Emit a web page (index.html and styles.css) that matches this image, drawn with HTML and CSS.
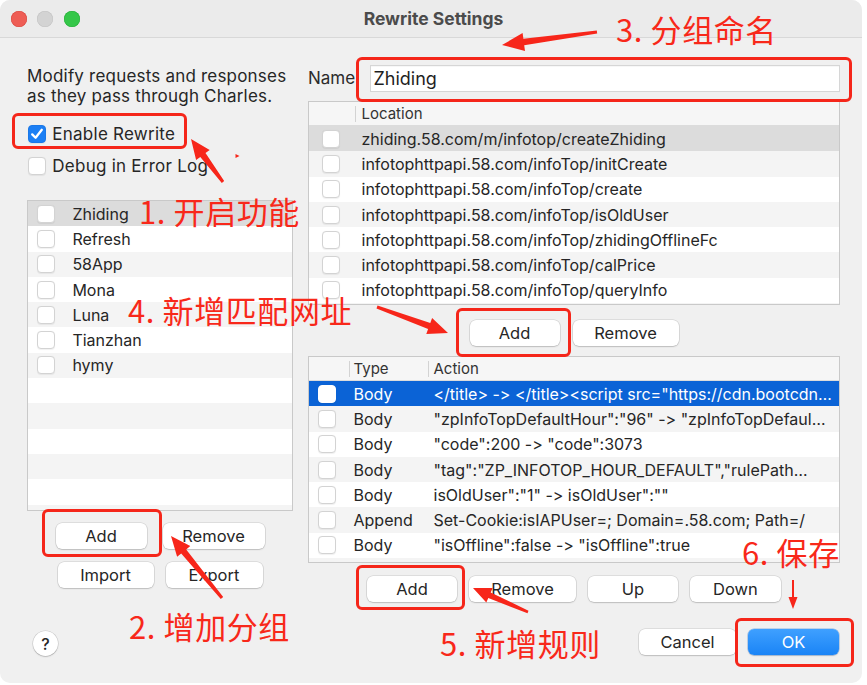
FILE: index.html
```html
<!DOCTYPE html>
<html lang="en">
<head>
<meta charset="utf-8">
<title>Rewrite Settings</title>
<link rel="stylesheet" href="styles.css">
</head>
<body>
<div class="window">
  <header class="titlebar">
    <div class="lights">
      <span class="light red"></span>
      <span class="light gray"></span>
      <span class="light green"></span>
    </div>
    <div class="title">Rewrite Settings</div>
    <div></div>
  </header>

  <main class="content">
    <section class="left">
      <p class="desc">Modify requests and responses<br>as they pass through Charles.</p>
      <div class="check-row enable">
        <span class="cb checked"><svg viewBox="0 0 18 18" width="18" height="18"><path d="M4.2 9.4 L7.6 12.8 L13.8 4.8" fill="none" stroke="#fff" stroke-width="2.3" stroke-linecap="round" stroke-linejoin="round"/></svg></span>
        <span>Enable Rewrite</span>
      </div>
      <div class="check-row debug">
        <span class="cb"></span>
        <span>Debug in Error Log</span>
      </div>

      <div class="list">
        <div class="row sel"><span class="cb"></span><span>Zhiding</span></div>
        <div class="row"><span class="cb"></span><span>Refresh</span></div>
        <div class="row"><span class="cb"></span><span>58App</span></div>
        <div class="row"><span class="cb"></span><span>Mona</span></div>
        <div class="row"><span class="cb"></span><span>Luna</span></div>
        <div class="row"><span class="cb"></span><span>Tianzhan</span></div>
        <div class="row"><span class="cb"></span><span>hymy</span></div>
        <div class="row"></div>
        <div class="row"></div>
        <div class="row"></div>
        <div class="row"></div>
        <div class="row"></div>
        <div class="row"></div>
      </div>

      <div class="btns first">
        <button class="btn w91">Add</button>
        <button class="btn w102">Remove</button>
      </div>
      <div class="btns second">
        <button class="btn w96">Import</button>
        <button class="btn w97">Export</button>
      </div>
      <button class="help">?</button>
    </section>

    <section class="right">
      <div class="name-row">
        <span class="label">Name</span>
        <div class="input">Zhiding</div>
      </div>

      <div class="table loc">
        <div class="thead">
          <div class="th"></div>
          <div class="th sep">Location</div>
        </div>
        <div class="trow sel"><span class="cb"></span><span class="cell">zhiding.58.com/m/infotop/createZhiding</span></div>
        <div class="trow"><span class="cb"></span><span class="cell">infotophttpapi.58.com/infoTop/initCreate</span></div>
        <div class="trow"><span class="cb"></span><span class="cell">infotophttpapi.58.com/infoTop/create</span></div>
        <div class="trow"><span class="cb"></span><span class="cell">infotophttpapi.58.com/infoTop/isOldUser</span></div>
        <div class="trow"><span class="cb"></span><span class="cell">infotophttpapi.58.com/infoTop/zhidingOfflineFc</span></div>
        <div class="trow"><span class="cb"></span><span class="cell">infotophttpapi.58.com/infoTop/calPrice</span></div>
        <div class="trow"><span class="cb"></span><span class="cell">infotophttpapi.58.com/infoTop/queryInfo</span></div>
        <div class="trow"><span class="cb"></span><span class="cell"></span></div>
      </div>

      <div class="btns loc-btns">
        <button class="btn w90">Add</button>
        <button class="btn w106">Remove</button>
      </div>

      <div class="table rules">
        <div class="thead">
          <div class="th"></div>
          <div class="th sep type">Type</div>
          <div class="th sep action">Action</div>
        </div>
        <div class="trow active"><span class="cb"></span><span class="cell type">Body</span><span class="cell action">&lt;/title&gt; -&gt; &lt;/title&gt;&lt;script src="https://cdn.bootcdn…</span></div>
        <div class="trow"><span class="cb"></span><span class="cell type">Body</span><span class="cell action">"zpInfoTopDefaultHour":"96" -&gt; "zpInfoTopDefaul…</span></div>
        <div class="trow"><span class="cb"></span><span class="cell type">Body</span><span class="cell action">"code":200 -&gt; "code":3073</span></div>
        <div class="trow"><span class="cb"></span><span class="cell type">Body</span><span class="cell action">"tag":"ZP_INFOTOP_HOUR_DEFAULT","rulePath…</span></div>
        <div class="trow"><span class="cb"></span><span class="cell type">Body</span><span class="cell action">isOldUser":"1" -&gt; isOldUser":""</span></div>
        <div class="trow"><span class="cb"></span><span class="cell type">Append</span><span class="cell action">Set-Cookie:isIAPUser=; Domain=.58.com; Path=/</span></div>
        <div class="trow"><span class="cb"></span><span class="cell type">Body</span><span class="cell action">"isOffline":false -&gt; "isOffline":true</span></div>
        <div class="trow"><span class="cb"></span><span class="cell type"></span><span class="cell action"></span></div>
      </div>

      <div class="btns rule-btns">
        <button class="btn w90">Add</button>
        <button class="btn w107">Remove</button>
        <button class="btn w90">Up</button>
        <button class="btn w91">Down</button>
      </div>

      <div class="dialog-btns">
        <button class="btn w97">Cancel</button>
        <button class="btn w91 primary">OK</button>
      </div>
    </section>
  </main>

  <div class="anno">
    <div class="box b-enable"></div>
    <div class="box b-add"></div>
    <div class="box b-name"></div>
    <div class="box b-locadd"></div>
    <div class="box b-ruleadd"></div>
    <div class="box b-ok"></div>

    <span class="note n1">1. 开启功能</span>
    <span class="note n2">2. 增加分组</span>
    <span class="note n3">3. 分组命名</span>
    <span class="note n4">4. 新增匹配网址</span>
    <span class="note n5">5. 新增规则</span>
    <span class="note n6">6. 保存</span>

    <svg class="arrows" width="862" height="683" viewBox="0 0 862 683">
      <g fill="#f7261a">
        <polygon points="224.2,181.1 205.5,153.1 209.7,149.9 191,139 196.1,160.1 200.3,156.9 221.8,182.9"/>
        <polygon points="223.2,597.0 186.2,549.4 190.3,546.0 171,536 177.1,556.8 181.2,553.4 220.8,599.0"/>
        <polygon points="596.8,30.5 523.4,38.8 522.6,33.1 502,45 525.0,50.9 524.2,45.2 597.2,33.5"/>
        <polygon points="376.5,308.4 428.1,329.1 426.3,334.1 448,333 432.1,318.1 430.3,323.1 377.5,305.6"/>
        <polygon points="528.5,610.8 490.7,592.4 492.7,587.9 473,588 486.3,602.5 488.3,598.0 527.5,613.2"/>
        <rect x="792" y="580" width="2" height="19"/>
        <polygon points="788.5,597 797.5,597 793,609"/>
        <polygon points="235.5,154 239.5,156 235.5,158"/>
      </g>
    </svg>
  </div>
</div>
</body>
</html>
```
FILE: styles.css
```css
* { box-sizing: border-box; }

html, body {
  margin: 0;
  padding: 0;
}

body {
  background: #ffffff;
  font-family: Inter, "Noto Sans", "Liberation Sans", sans-serif;
  font-size: 16px;
  color: #262626;
  font-variant-ligatures: none;
  font-feature-settings: "calt" 0, "liga" 0;
}

.window {
  position: relative;
  width: 862px;
  height: 683px;
  background: #f0f0f0;
  border-radius: 10px;
  overflow: hidden;
  display: flex;
  flex-direction: column;
}

/* title bar */
.titlebar {
  flex: none;
  height: 38px;
  padding-left: 5px;
  background: #ebebeb;
  border-bottom: 1px solid #d8d8d8;
  display: grid;
  grid-template-columns: 1fr auto 1fr;
  align-items: center;
}

.lights {
  display: flex;
  gap: 10.5px;
  padding-left: 5.7px;
}

.light {
  width: 16px;
  height: 16px;
  border-radius: 50%;
}

.light.red { background: #ee5d55; box-shadow: inset 0 0 0 0.5px #d9473f; }
.light.gray { background: #d3d3d3; box-shadow: inset 0 0 0 0.5px #c2c2c2; }
.light.green { background: #35c749; box-shadow: inset 0 0 0 0.5px #25ad37; }

.title {
  font-weight: 700;
  font-size: 17.5px;
  color: #4b4b4b;
}

/* content */
.content {
  flex: 1;
  display: flex;
  gap: 15px;
  padding: 26px 22px 0 27px;
}

.left {
  flex: none;
  width: 266px;
  display: flex;
  flex-direction: column;
}

.desc {
  margin: 2px 0 0;
  line-height: 20px;
  font-size: 17px;
  letter-spacing: 0.2px;
  white-space: nowrap;
}

.check-row {
  display: flex;
  align-items: center;
  gap: 6px;
  height: 20px;
  padding-left: 1.3px;
  font-size: 17px;
  letter-spacing: 0.25px;
  white-space: nowrap;
}

.check-row.enable { margin-top: 18px; }
.check-row.debug { margin-top: 12px; }

.cb {
  flex: none;
  width: 18px;
  height: 18px;
  border-radius: 4px;
  background: #fff;
  border: 1px solid #d3d3d3;
  box-shadow: 0 0.5px 1px rgba(0, 0, 0, 0.06);
  display: block;
}

.cb.checked {
  background: #1c7ff4;
  border-color: #1a78e8;
}

.cb.checked svg { display: block; margin: -1px; }

/* left list */
.list {
  margin-top: 24px;
  height: 311px;
  background: #fff;
  border: 1px solid #c9c9c9;
  overflow: hidden;
}

.row {
  height: 25.3px;
  display: flex;
  align-items: center;
  padding-left: 9px;
}

.row .cb { margin-right: 17.4px; }

.list .row:nth-child(odd),
.table .trow:nth-of-type(odd) { background: #f4f4f4; }

.list .row.sel,
.table .trow.sel { background: #dcdcdc; }

/* buttons */
.btns {
  display: flex;
  justify-content: center;
}

.btns.first { margin-top: 12px; gap: 16px; }
.btns.second { margin-top: 13px; gap: 12px; }

.btn {
  flex: none;
  height: 26px;
  padding: 0;
  border: none;
  border-radius: 6px;
  background: #fff;
  font: inherit;
  font-size: 16.5px;
  color: #262626;
  box-shadow: 0 0 0 0.5px rgba(0, 0, 0, 0.16), 0 1px 1.5px rgba(0, 0, 0, 0.14);
  display: flex;
  align-items: center;
  justify-content: center;
}

.w90 { width: 90px; }
.w91 { width: 91px; }
.w96 { width: 96px; }
.w97 { width: 97px; }
.w102 { width: 102px; }
.w106 { width: 106px; }
.w107 { width: 107px; }

.btn.primary {
  background: linear-gradient(#3fa0ff, #1a84f6);
  color: #fff;
  box-shadow: 0 0 0 0.5px rgba(0, 90, 200, 0.4), 0 1px 1.5px rgba(0, 0, 0, 0.15);
}

.help {
  margin: 43px 0 0 6px;
  width: 25px;
  height: 25px;
  padding: 0;
  border: none;
  border-radius: 50%;
  background: #fff;
  font: inherit;
  font-size: 16px;
  font-weight: 500;
  color: #262626;
  box-shadow: 0 0 0 0.5px rgba(0, 0, 0, 0.16), 0 1px 1.5px rgba(0, 0, 0, 0.16);
}

/* right column */
.right {
  flex: 1;
  display: flex;
  flex-direction: column;
}

.name-row {
  display: flex;
  align-items: center;
  height: 28px;
}

.name-row .label {
  width: 62px;
  font-size: 17px;
  color: #2b2b2b;
}

.input {
  flex: 1;
  height: 27px;
  background: #fff;
  border: 1px solid #d6d6d6;
  box-shadow: inset 0 1px 0 rgba(0, 0, 0, 0.03);
  font-size: 18px;
  padding-left: 2.5px;
  display: flex;
  align-items: center;
  color: #1f1f1f;
}

.table {
  background: #fff;
  border: 1px solid #c9c9c9;
  overflow: hidden;
}

.thead {
  height: 24px;
  background: #f6f6f6;
  border-bottom: 1px solid #dcdcdc;
  display: grid;
  align-items: center;
  font-size: 15px;
  color: #333;
}

.th.sep {
  height: 16px;
  border-left: 1px solid #d3d3d3;
  display: flex;
  align-items: center;
  line-height: 16px;
}

.trow {
  height: 25.3px;
  display: grid;
  align-items: center;
}

.cell {
  white-space: nowrap;
  overflow: hidden;
  text-overflow: ellipsis;
}

.loc { margin-top: 9px; height: 204px; }
.loc .thead, .loc .trow { grid-template-columns: 46px 1fr; }
.loc .th.sep { padding-left: 5.5px; }
.loc .trow .cb { margin-left: 13.4px; }
.loc .trow .cell { padding-left: 6.5px; }

.loc-btns { margin-top: 15px; gap: 13px; }

.rules { margin-top: 10px; height: 207px; }
.rules .thead, .rules .trow { grid-template-columns: 40px 79px 1fr; }
.rules .th.type { padding-left: 3.5px; }
.rules .th.action { padding-left: 4.5px; }
.rules .trow .cb { margin-left: 9px; }
.rules .cell.type { padding-left: 4.5px; }
.rules .cell.action { padding-left: 5.5px; padding-right: 6px; }

.table .trow.active { background: #0b63d6; color: #fff; }
.table .trow.active .cb { border-color: #fff; }

.rule-btns { margin-top: 13px; gap: 12px; }

.dialog-btns {
  display: flex;
  justify-content: flex-end;
  gap: 12px;
  margin-top: 27px;
  padding-right: 1px;
}

/* annotation layer */
.anno {
  position: absolute;
  inset: 0;
  pointer-events: none;
}

.arrows {
  position: absolute;
  left: 0;
  top: 0;
}

.box {
  position: absolute;
  border: 3px solid #f5261a;
  border-radius: 6px;
}

.b-enable { left: 12px; top: 113px; width: 175px; height: 36px; }
.b-add { left: 42px; top: 509px; width: 120px; height: 48px; }
.b-name { left: 356px; top: 57px; width: 496px; height: 45px; }
.b-locadd { left: 456px; top: 308px; width: 115px; height: 49px; }
.b-ruleadd { left: 356px; top: 565px; width: 109px; height: 45px; }
.b-ok { left: 735px; top: 618px; width: 119px; height: 49px; }

.note {
  position: absolute;
  font-family: "Noto Sans CJK SC", "Liberation Sans", sans-serif;
  font-size: 31px;
  line-height: 31px;
  letter-spacing: 0.6px;
  color: #f8281a;
  white-space: nowrap;
}

.n1 { left: 139px; top: 195px; }
.n2 { left: 129px; top: 610px; }
.n3 { left: 616px; top: 13px; }
.n4 { left: 128px; top: 294px; }
.n5 { left: 440px; top: 627px; }
.n6 { left: 742px; top: 536px; }
```
